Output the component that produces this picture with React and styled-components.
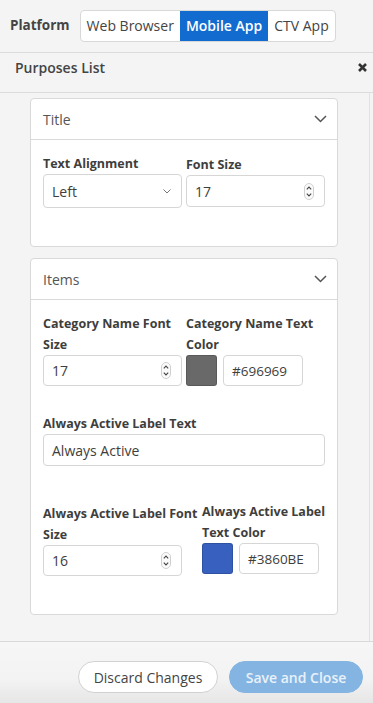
import React from 'react';
import styled, { createGlobalStyle } from 'styled-components';

const GlobalStyle = createGlobalStyle`
  html, body, #root {
    margin: 0;
    padding: 0;
    height: 100%;
  }
  body {
    font-family: "Open Sans", "Liberation Sans", sans-serif;
    background: #f4f4f4;
    color: #3e3e3c;
  }
  * { box-sizing: border-box; }
`;

const Page = styled.div`
  height: 703px;
  display: flex;
  flex-direction: column;
  background: #f4f4f4;
  overflow: hidden;
`;

const PlatformBar = styled.div`
  height: 53px;
  display: flex;
  align-items: center;
  padding: 0 0 0 10px;
  border-bottom: 1px solid #dcdcdc;
  flex-shrink: 0;
`;

const PlatformLabel = styled.span`
  font-size: 13.5px;
  font-weight: 700;
  color: #444;
  margin-right: 10px;
  margin-top: -2px;
`;

const Segments = styled.div`
  display: flex;
  height: 32px;
  border: 1px solid #d8d8d8;
  border-radius: 4px;
  background: #fff;
  overflow: hidden;
  margin-top: -1px;
`;

const Segment = styled.div`
  display: flex;
  align-items: center;
  padding: 0 6px;
  font-size: 14px;
  color: ${p => (p.$active ? '#fff' : '#444')};
  background: ${p => (p.$active ? '#126bcf' : 'transparent')};
  font-weight: ${p => (p.$active ? 600 : 400)};
  white-space: nowrap;
`;

const PanelHeader = styled.div`
  height: 40px;
  display: flex;
  align-items: flex-start;
  justify-content: space-between;
  padding: 5px 6px 0 15px;
  border-bottom: 1px solid #dcdcdc;
  flex-shrink: 0;
`;

const PanelTitle = styled.span`
  font-size: 14px;
  font-weight: 600;
  color: #444;
`;

const CloseIcon = styled.svg`
  width: 9px;
  height: 9px;
  margin-top: 5px;
`;

const ScrollBody = styled.div`
  flex: 1;
  margin-right: 3px;
  border-right: 1px solid #e2e2e2;
  padding: 5px 30px 0 30px;
  overflow: hidden;
`;

const Card = styled.div`
  width: 308px;
  background: #fff;
  border: 1px solid #d9d9d9;
  border-radius: 4px;
  margin-bottom: 11px;
`;

const CardHeader = styled.div`
  height: 41px;
  display: flex;
  align-items: center;
  justify-content: space-between;
  padding: 0 10px 0 12px;
  border-bottom: 1px solid #d9d9d9;
  font-size: 14px;
  color: #555;
`;

const CardBody = styled.div`
  padding: 13px 10px 12px 12px;
`;

const Group = styled.div`
  margin-bottom: ${p => p.$mb || 26}px;
`;

const Row = styled.div`
  display: flex;
  gap: 4px;
  align-items: flex-start;
`;

const Col = styled.div`
  width: ${p => (p.$w ? `${p.$w}px` : 'auto')};
  flex: ${p => (p.$w ? 'none' : 1)};
  margin-top: ${p => p.$mt || 0}px;
  min-width: 0;
`;

const Label = styled.div`
  font-size: 12.5px;
  font-weight: 700;
  color: #3e3e3c;
  line-height: 21px;
`;

const Field = styled.div`
  width: ${p => (p.$w ? `${p.$w}px` : '282px')};
  height: ${p => p.$h || 32}px;
  border: 1px solid #d6d6d6;
  border-radius: 4px;
  background: #fff;
  display: flex;
  align-items: center;
  justify-content: space-between;
  padding: 0 ${p => p.$pr || 8}px 0 8px;
  font-size: ${p => p.$fs || 14}px;
  color: #3e3e3c;
`;

const ColorLine = styled.div`
  display: flex;
  gap: 6px;
  align-items: center;
`;

const Swatch = styled.div`
  width: 31px;
  height: 31px;
  border-radius: 3px;
  border: 1px solid rgba(0, 0, 0, 0.15);
  background: ${p => p.$color};
`;

const Footer = styled.div`
  height: 62px;
  flex-shrink: 0;
  border-top: 1px solid #d9d9d9;
  display: flex;
  justify-content: flex-end;
  align-items: flex-start;
  gap: 11px;
  padding: 19px 10px 0 0;
  background: linear-gradient(#f6f6f6, #f3f3f3 60%, #e6e6e6);
`;

const Button = styled.div`
  width: ${p => p.$w}px;
  height: 32px;
  border-radius: 16px;
  display: flex;
  align-items: center;
  justify-content: center;
  font-size: 14px;
  white-space: nowrap;
  border: 1px solid ${p => (p.$primary ? '#84b5e2' : '#d2d2d2')};
  background: ${p => (p.$primary ? '#84b5e2' : '#fff')};
  color: ${p => (p.$primary ? '#e9f1fa' : '#444')};
  font-weight: ${p => (p.$primary ? 600 : 400)};
`;

const Chevron = () => (
  <svg width="13" height="8" viewBox="0 0 13 8">
    <path d="M1 1l5.5 5.5L12 1" fill="none" stroke="#555" strokeWidth="1.5" />
  </svg>
);

const SmallChevron = () => (
  <svg width="8" height="5" viewBox="0 0 8 5">
    <path d="M0.5 0.5L4 4l3.5-3.5" fill="none" stroke="#777" strokeWidth="1" />
  </svg>
);

const Spinner = () => (
  <svg width="10" height="17" viewBox="0 0 10 17">
    <rect x="0.5" y="0.5" width="9" height="16" rx="4.5" fill="#fafafa" stroke="#cfcfcf" />
    <path d="M2.8 6.3L5 4l2.2 2.3" fill="none" stroke="#444" strokeWidth="1.1" />
    <path d="M2.8 10.7L5 13l2.2-2.3" fill="none" stroke="#444" strokeWidth="1.1" />
  </svg>
);

export default function App() {
  return (
    <Page>
      <GlobalStyle />
      <PlatformBar>
        <PlatformLabel>Platform</PlatformLabel>
        <Segments>
          <Segment>Web Browser</Segment>
          <Segment $active>Mobile App</Segment>
          <Segment>CTV App</Segment>
        </Segments>
      </PlatformBar>

      <PanelHeader>
        <PanelTitle>Purposes List</PanelTitle>
        <CloseIcon viewBox="0 0 9 9">
          <path d="M1 1l7 7M8 1L1 8" stroke="#333" strokeWidth="2.6" />
        </CloseIcon>
      </PanelHeader>

      <ScrollBody>
        <Card>
          <CardHeader>
            Title
            <Chevron />
          </CardHeader>
          <CardBody>
            <Group>
              <Row>
                <Col $w={139}>
                  <Label>Text Alignment</Label>
                  <Field $w={139} $h={34} $pr={10}>
                    Left
                    <SmallChevron />
                  </Field>
                </Col>
                <Col $mt={1}>
                  <Label>Font Size</Label>
                  <Field $w={139} $pr={10}>
                    17
                    <Spinner />
                  </Field>
                </Col>
              </Row>
            </Group>
          </CardBody>
        </Card>

        <Card>
          <CardHeader>
            Items
            <Chevron />
          </CardHeader>
          <CardBody>
            <Group $mb={27}>
              <Row>
                <Col $w={139}>
                  <Label>Category Name Font Size</Label>
                  <Field $w={139} $h={31} $pr={10}>
                    17
                    <Spinner />
                  </Field>
                </Col>
                <Col>
                  <Label>Category Name Text Color</Label>
                  <ColorLine>
                    <Swatch $color="#696969" />
                    <Field $w={80} $h={31} $fs={13.5}>#696969</Field>
                  </ColorLine>
                </Col>
              </Row>
            </Group>
            <Group $mb={37}>
              <Label>Always Active Label Text</Label>
              <Field>Always Active</Field>
            </Group>
            <Group>
              <Row>
                <Col $w={155}>
                  <Label>Always Active Label Font Size</Label>
                  <Field $w={139} $h={31} $pr={10}>
                    16
                    <Spinner />
                  </Field>
                </Col>
                <Col $mt={-2}>
                  <Label>Always Active Label Text Color</Label>
                  <ColorLine>
                    <Swatch $color="#3860be" />
                    <Field $w={80} $h={31} $fs={13.5}>#3860BE</Field>
                  </ColorLine>
                </Col>
              </Row>
            </Group>
          </CardBody>
        </Card>
      </ScrollBody>

      <Footer>
        <Button $w={140}>Discard Changes</Button>
        <Button $primary $w={134}>Save and Close</Button>
      </Footer>
    </Page>
  );
}
